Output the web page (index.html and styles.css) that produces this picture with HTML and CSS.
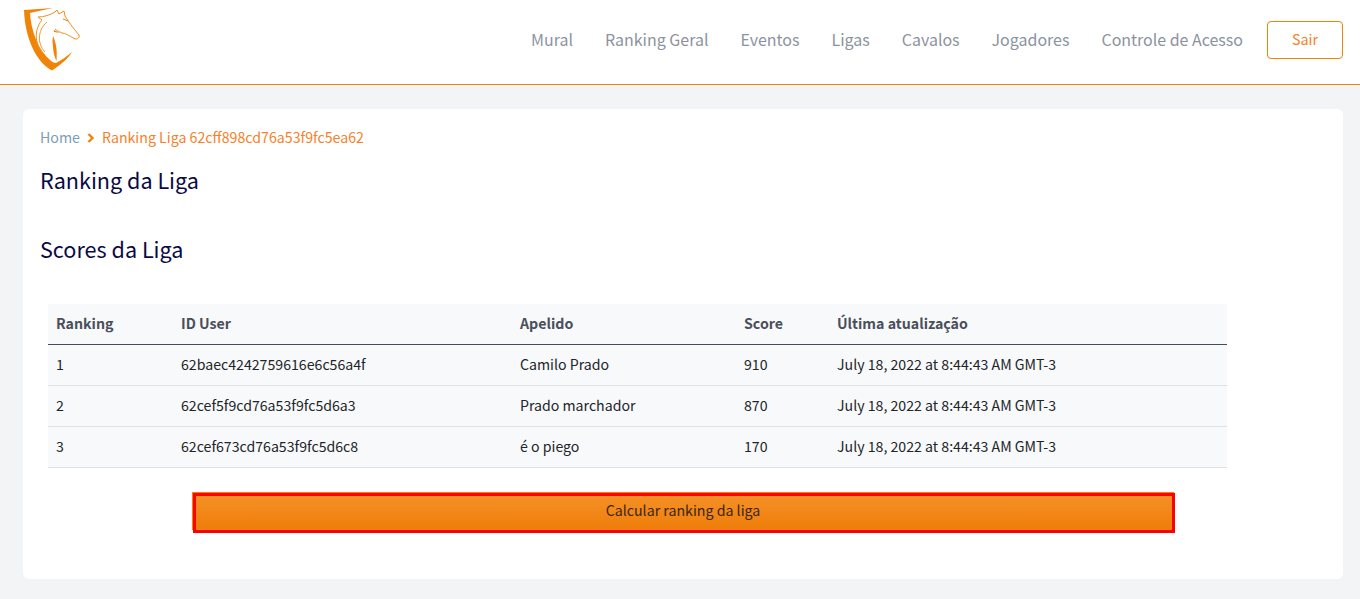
FILE: index.html
```html
<!DOCTYPE html>
<html lang="pt">
<head>
<meta charset="utf-8">
<title>Ranking da Liga</title>
<link rel="stylesheet" href="styles.css">
</head>
<body>
<header class="topbar">
  <a class="logo" href="#">
    <svg width="64" height="70" viewBox="20 4 64 70" fill="none">
      <path d="M24 10 L53 8 C45 10 37 11 30 13 C31 30 38 50 50 60 C52 62 54 63 56 63 C62 60 67 56 72 52 C67 60 59 66 52 70.500 C36 62 25 38 24 10 Z" fill="#f08408"/>
      <path d="M38 17 C44 17 50 15 55 12 L57 10 L59 14 L64 11 L65 16 C68 21 73 28 79 35 C80 38 77 40 74 38.500 C70 36 65 33 62 33 C60 32 57 31 55 29" stroke="#f08f20" stroke-width="1"/>
      <path d="M38 17 L42 20 C37 26 35 34 37 42 C38 47 41 52 45 55" stroke="#f08f20" stroke-width="1"/>
      <path d="M47 22 C41 27 38 35 40 43 C41 47 43 50 45 52" stroke="#f08f20" stroke-width="0.900"/>
      <path d="M53 36 C56 42 57.500 50 56.500 61 C53 55 53 46 52.500 41 Z" fill="#f08408"/>
      <path d="M54 30 L60 33 L54 32 Z" fill="#f08408"/>
      <path d="M63 19 L68 21" stroke="#f08408" stroke-width="1"/>
    </svg>
  </a>
  <nav class="nav">
    <a href="#">Mural</a>
    <a href="#">Ranking Geral</a>
    <a href="#">Eventos</a>
    <a href="#">Ligas</a>
    <a href="#">Cavalos</a>
    <a href="#">Jogadores</a>
    <a href="#">Controle de Acesso</a>
    <button class="logout">Sair</button>
  </nav>
</header>
<main class="card">
  <div class="crumbs">
    <a href="#">Home</a>
    <svg class="chev" width="8" height="10" viewBox="0 0 8 10" fill="none"><path d="M1.500 1 L5.500 5 L1.500 9" stroke="#f08408" stroke-width="2.400"/></svg>
    <span>Ranking Liga 62cff898cd76a53f9fc5ea62</span>
  </div>
  <h1>Ranking da Liga</h1>
  <h2>Scores da Liga</h2>
  <table class="scores">
    <thead>
      <tr><th class="c1">Ranking</th><th class="c2">ID User</th><th class="c3">Apelido</th><th class="c4">Score</th><th>Última atualização</th></tr>
    </thead>
    <tbody>
      <tr><td>1</td><td>62baec4242759616e6c56a4f</td><td>Camilo Prado</td><td>910</td><td>July 18, 2022 at 8:44:43 AM GMT-3</td></tr>
      <tr><td>2</td><td>62cef5f9cd76a53f9fc5d6a3</td><td>Prado marchador</td><td>870</td><td>July 18, 2022 at 8:44:43 AM GMT-3</td></tr>
      <tr><td>3</td><td>62cef673cd76a53f9fc5d6c8</td><td>é o piego</td><td>170</td><td>July 18, 2022 at 8:44:43 AM GMT-3</td></tr>
    </tbody>
  </table>
  <button class="calc">Calcular ranking da liga</button>
</main>
</body>
</html>
```
FILE: styles.css
```css
* { box-sizing: border-box; }
html, body { margin: 0; height: 599px; overflow: hidden; }
body {
  background: #f3f4f6;
  font-family: "Noto Sans CJK SC", "Noto Sans", sans-serif;
  color: #212529;
}
.topbar {
  height: 85px;
  background: #fff;
  border-bottom: 1px solid #f08408;
  display: flex;
  align-items: center;
  justify-content: space-between;
  padding: 0 17px 4px 20px;
}
.logo { display: block; height: 70px; margin-top: -2px; }
.nav { display: flex; align-items: center; gap: 32px; }
.nav a { color: #8c93a0; text-decoration: none; font-size: 15.970px; line-height: 24px; padding-bottom: 2px; }
.logout {
  width: 76px; height: 38px;
  margin-left: -8px;
  background: #fff;
  border: 1px solid #f08408;
  border-radius: 4px;
  color: #f5822a;
  font: inherit;
  font-size: 14.400px;
  padding: 0 0 3px;
}
.card {
  margin: 24px 17px 0 23px;
  height: 470px;
  background: #fff;
  border-radius: 6px;
  padding: 19px 18px 0 17px;
}
.crumbs { display: flex; align-items: center; height: 18px; font-size: 14.200px; }
.crumbs a { color: #7f9db5; text-decoration: none; }
.crumbs span { color: #f5822a; }
.chev { margin: 1px 7px 0; }
h1, h2 { margin: 0; font-weight: 400; font-size: 21.600px; color: #0a0a45; line-height: 32px; }
h1 { margin-top: 18px; }
h2 { margin-top: 37px; }
.scores {
  margin: 39px 0 0 8px;
  width: 1179px;
  border-collapse: collapse;
  background: #f8f9fa;
  font-size: 14.150px;
  table-layout: fixed;
}
.scores th {
  height: 40px;
  text-align: left;
  padding: 0 8px 2px;
  color: #4a4f5c;
  font-size: 14.200px;
  font-weight: 700;
  border-bottom: 1px solid #454d5c;
}
.scores td {
  height: 41px;
  padding: 0 8px 1px;
  border-bottom: 1px solid #dee2e6;
}
.c1 { width: 125px; }
.c2 { width: 339px; }
.c3 { width: 224px; }
.c4 { width: 93px; }
.calc {
  display: block;
  position: relative;
  margin: 24px 0 0 152px;
  width: 982px;
  height: 38px;
  border: 1px solid #f08408;
  border-radius: 0;
  background: linear-gradient(#f59229, #ef7e0a);
  color: #3a2410;
  font: inherit;
  font-size: 14.200px;
  padding: 0 0 1px;
}
.calc::after {
  content: "";
  position: absolute;
  left: 0; top: 0; right: -2px; bottom: -4px;
  border: 3px solid #f00;
}
```
